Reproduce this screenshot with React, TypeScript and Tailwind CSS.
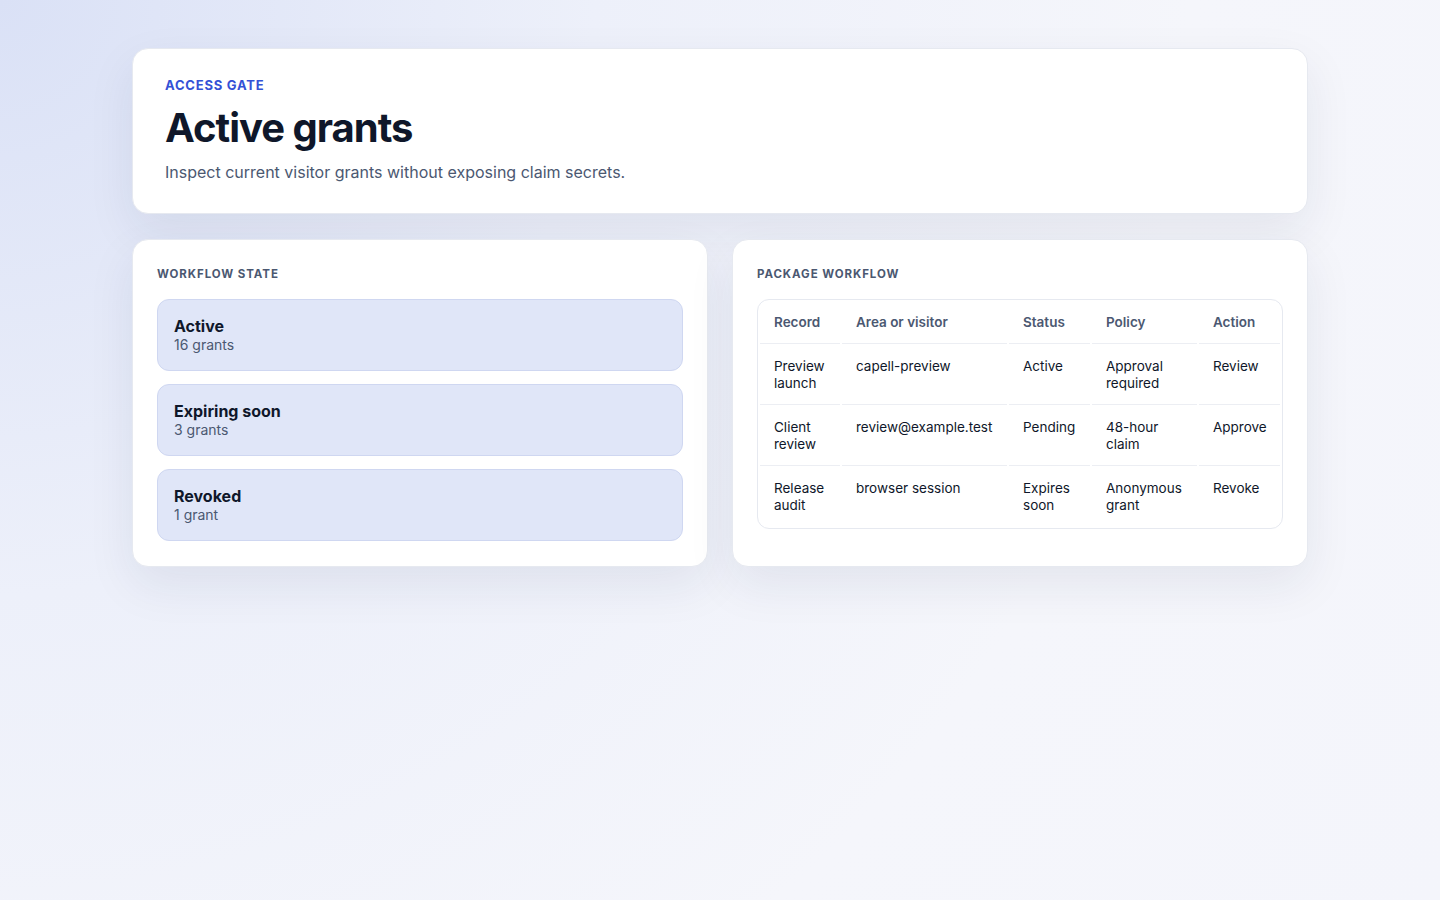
import React from 'react';

interface StateItem {
  label: string;
  count: string;
}

interface Row {
  record: string;
  area: string;
  status: string;
  policy: string;
  action: string;
}

const states: StateItem[] = [
  { label: 'Active', count: '16 grants' },
  { label: 'Expiring soon', count: '3 grants' },
  { label: 'Revoked', count: '1 grant' },
];

const rows: Row[] = [
  { record: 'Preview launch', area: 'capell-preview', status: 'Active', policy: 'Approval required', action: 'Review' },
  { record: 'Client review', area: 'review@example.test', status: 'Pending', policy: '48-hour claim', action: 'Approve' },
  { record: 'Release audit', area: 'browser session', status: 'Expires soon', policy: 'Anonymous grant', action: 'Revoke' },
];

const card =
  'rounded-2xl border border-[#e6e9f0] bg-white shadow-[0_18px_48px_rgba(30,41,80,0.08)]';

const th = 'border-b border-[#eceef3] px-3.5 py-3 font-semibold text-[#4b5871]';

export default function App() {
  return (
    <div
      className="min-h-[900px] w-full bg-[radial-gradient(circle_at_0%_0%,#dae1f6_0%,#edf0fa_35%,#f5f6fb_70%,#f4f5fb_100%)] text-[#0f172a]"
      style={{ fontFamily: 'Inter, "Noto Sans", sans-serif' }}
    >
      <main className="mx-auto flex w-[1176px] flex-col pt-12">
        {/* header */}
        <section className={`${card} px-8 pt-[28px] pb-[29px]`}>
          <p className="text-[13px] font-bold uppercase leading-4 tracking-[0.06em] text-[#3451d6]">Access gate</p>
          <h1 className="mt-[13px] text-[40px] font-bold leading-[44px] tracking-[-0.025em] text-[#0f172a]">
            Active grants
          </h1>
          <p className="mt-[10px] text-[16px] leading-6 text-[#4b5871]">
            Inspect current visitor grants without exposing claim secrets.
          </p>
        </section>

        <div className="mt-[25px] grid grid-cols-2 gap-6">
          {/* workflow state */}
          <section className={`${card} px-6 pt-[26px] pb-[25px]`}>
            <h2 className="mb-[17px] text-[11.5px] font-bold uppercase leading-4 tracking-[0.08em] text-[#4b5871]">
              Workflow state
            </h2>
            <div className="flex flex-col gap-[13px]">
              {states.map((s) => (
                <div
                  key={s.label}
                  className="rounded-xl border border-[#cfd7f1] bg-[#e0e6f8] px-4 py-4"
                >
                  <div className="text-[16px] font-bold leading-5 text-[#0f172a]">{s.label}</div>
                  <div className="text-[14px] leading-[18px] text-[#4b5871]">{s.count}</div>
                </div>
              ))}
            </div>
          </section>

          {/* package workflow */}
          <section className={`${card} px-6 pt-[26px] pb-[25px]`}>
            <h2 className="mb-[17px] text-[11.5px] font-bold uppercase leading-4 tracking-[0.08em] text-[#4b5871]">
              Package workflow
            </h2>
            <div className="overflow-hidden rounded-xl border border-[#e6e9f0]">
              <table className="w-full table-fixed border-separate border-spacing-[2px] text-left text-[13.5px] leading-[17px]">
                <colgroup>
                  <col className="w-[80px]" />
                  <col className="w-[165px]" />
                  <col className="w-[81px]" />
                  <col className="w-[105px]" />
                  <col />
                </colgroup>
                <thead>
                  <tr>
                    <th className={th}>Record</th>
                    <th className={th}>Area or visitor</th>
                    <th className={th}>Status</th>
                    <th className={th}>Policy</th>
                    <th className={th}>Action</th>
                  </tr>
                </thead>
                <tbody>
                  {rows.map((r, i) => {
                    const td =
                      'px-3.5 py-3 align-top text-[#0f172a] ' +
                      (i < rows.length - 1 ? 'border-b border-[#eceef3]' : '');
                    return (
                      <tr key={r.record}>
                        <td className={td}>{r.record}</td>
                        <td className={td}>{r.area}</td>
                        <td className={td}>{r.status}</td>
                        <td className={td}>{r.policy}</td>
                        <td className={td}>{r.action}</td>
                      </tr>
                    );
                  })}
                </tbody>
              </table>
            </div>
          </section>
        </div>
      </main>
    </div>
  );
}
